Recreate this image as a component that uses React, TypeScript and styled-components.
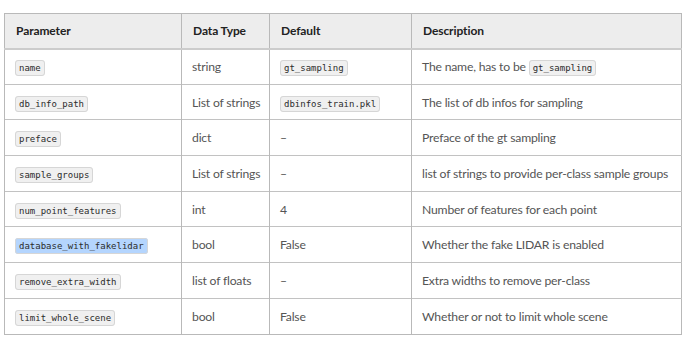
import React from "react";
import styled, { createGlobalStyle } from "styled-components";

const Global = createGlobalStyle`
  html, body { margin: 0; padding: 0; background: #ffffff; }
  body { font-family: Lato, "Noto Sans", sans-serif; }
`;

const Page = styled.div`
  padding: 13px 9px 0 4px;
`;

const Table = styled.table`
  width: 677px;
  border-collapse: collapse;
  table-layout: fixed;
  border: 1px solid #b9b9b9;
  font-size: 12.2px;
  letter-spacing: -0.2px;
  color: #555555;
`;

const HeadRow = styled.tr`
  background: #ededed;
  height: 35px;
  border-bottom: 2px solid #cccccc;
`;

const Th = styled.th`
  text-align: left;
  font-weight: 700;
  color: #222222;
  padding: 0 10px 0 11px;
  border-left: 1px solid #b9b9b9;
  font-size: 12px;
  letter-spacing: -0.1px;
`;

const Row = styled.tr`
  height: 35.7px;
  border-top: 1px solid #c2c2c2;
`;

const Td = styled.td`
  padding: 0 10px;
  border-left: 1px solid #b9b9b9;
  vertical-align: middle;
  white-space: nowrap;
`;

const Code = styled.code<{ $selected?: boolean }>`
  font-family: "DejaVu Sans Mono", "Liberation Mono", monospace;
  font-size: 9px;
  letter-spacing: 0;
  color: #2b2b2b;
  background: ${(p) => (p.$selected ? "#b4d5fe" : "#f0f0f0")};
  border: 1px solid #d6d6d6;
  border-radius: 3px;
  padding: 2px 3px;
`;

type Cell = string | { code: string; selected?: boolean } | { text: string; code: string };

const rows: { param: string; selected?: boolean; type: string; def: Cell; desc: Cell }[] = [
  { param: "name", type: "string", def: { code: "gt_sampling" }, desc: { text: "The name, has to be ", code: "gt_sampling" } },
  { param: "db_info_path", type: "List of strings", def: { code: "dbinfos_train.pkl" }, desc: "The list of db infos for sampling" },
  { param: "preface", type: "dict", def: "–", desc: "Preface of the gt sampling" },
  { param: "sample_groups", type: "List of strings", def: "–", desc: "list of strings to provide per-class sample groups" },
  { param: "num_point_features", type: "int", def: "4", desc: "Number of features for each point" },
  { param: "database_with_fakelidar", selected: true, type: "bool", def: "False", desc: "Whether the fake LIDAR is enabled" },
  { param: "remove_extra_width", type: "list of floats", def: "–", desc: "Extra widths to remove per-class" },
  { param: "limit_whole_scene", type: "bool", def: "False", desc: "Whether or not to limit whole scene" },
];

function renderCell(c: Cell) {
  if (typeof c === "string") return c;
  if ("text" in c)
    return (
      <>
        {c.text}
        <Code>{c.code}</Code>
      </>
    );
  return <Code $selected={c.selected}>{c.code}</Code>;
}

export default function App() {
  return (
    <Page>
      <Global />
      <Table>
        <colgroup>
          <col style={{ width: 177 }} />
          <col style={{ width: 88 }} />
          <col style={{ width: 142 }} />
          <col style={{ width: 270 }} />
        </colgroup>
        <thead>
          <HeadRow>
            <Th>Parameter</Th>
            <Th>Data Type</Th>
            <Th>Default</Th>
            <Th>Description</Th>
          </HeadRow>
        </thead>
        <tbody>
          {rows.map((r) => (
            <Row key={r.param}>
              <Td>
                <Code $selected={r.selected}>{r.param}</Code>
              </Td>
              <Td>{r.type}</Td>
              <Td>{renderCell(r.def)}</Td>
              <Td>{renderCell(r.desc)}</Td>
            </Row>
          ))}
        </tbody>
      </Table>
    </Page>
  );
}
